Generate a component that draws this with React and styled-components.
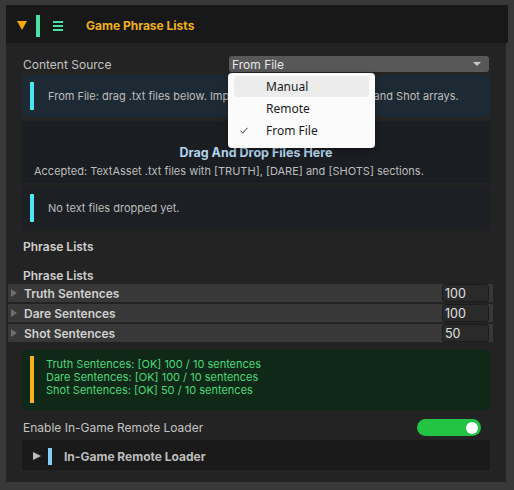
import React from "react"
import styled, { createGlobalStyle } from "styled-components"

const GlobalStyle = createGlobalStyle`
  html, body {
    margin: 0;
    padding: 0;
    background: #383838;
    font-family: Inter, "Noto Sans", sans-serif;
  }
`

const Page = styled.div`
  width: 514px;
  height: 490px;
  padding: 5px 0 0 6px;
  box-sizing: border-box;
  position: relative;
`

const Panel = styled.div`
  width: 500px;
  height: 477px;
  background: #232323;
  display: flex;
  flex-direction: column;
`

const Header = styled.div`
  width: 502px;
  height: 38px;
  flex-shrink: 0;
  background: #181818;
  display: flex;
  align-items: center;
  padding: 3px 0 0 11px;
  box-sizing: border-box;
`

const Caret = styled.div`
  width: 0;
  height: 0;
  border-left: 5px solid transparent;
  border-right: 5px solid transparent;
  border-top: 9px solid #f5a90f;
`

const AccentBar = styled.div`
  width: ${(p) => p.$w || 4}px;
  height: ${(p) => p.$h}px;
  background: ${(p) => p.$color};
  flex-shrink: 0;
`

const Title = styled.div`
  color: #f0b21a;
  font-size: 12px;
  font-weight: 700;
  margin-left: 23px;
`

const Body = styled.div`
  display: flex;
  flex-direction: column;
  padding: 13px 16px 0 16px;
`

const FieldRow = styled.div`
  display: flex;
  align-items: center;
  height: 16px;
  padding-left: 1px;
`

const Label = styled.div`
  width: 206px;
  flex-shrink: 0;
  color: #c4c4c4;
  font-size: 12px;
`

const Dropdown = styled.div`
  flex: 1;
  height: 16px;
  margin-right: 1px;
  background: #585858;
  border-radius: 3px;
  display: flex;
  align-items: center;
  justify-content: space-between;
  padding: 0 8px 0 3px;
  box-sizing: border-box;
  color: #e6e6e6;
  font-size: 12px;
`

const SmallArrow = styled.div`
  width: 0;
  height: 0;
  border-left: 4px solid transparent;
  border-right: 4px solid transparent;
  border-top: 4px solid #c8c8c8;
`

const Note = styled.div`
  margin-top: ${(p) => p.$mt || 4}px;
  width: 468px;
  min-height: ${(p) => p.$h}px;
  background: ${(p) => p.$bg};
  display: flex;
  align-items: ${(p) => (p.$top ? "flex-start" : "center")};
  padding: ${(p) => (p.$top ? "6px 0 0 8px" : "0 0 0 8px")};
  box-sizing: border-box;
`

const NoteText = styled.div`
  margin-left: 14px;
  color: #bdbdbd;
  font-size: 11px;
  line-height: 14px;
  white-space: nowrap;
  overflow: hidden;
`

const DropZone = styled.div`
  margin-top: 4px;
  width: 468px;
  height: 62px;
  background: #1a1d21;
  display: flex;
  flex-direction: column;
  align-items: center;
  padding-top: 24px;
  box-sizing: border-box;
`

const DropTitle = styled.div`
  color: #b4d4ec;
  font-size: 12.5px;
  font-weight: 700;
  line-height: 16px;
`

const DropSub = styled.div`
  align-self: flex-start;
  margin-left: 12px;
  margin-top: 3px;
  color: #bdbdbd;
  font-size: 11px;
  line-height: 14px;
`

const SectionLabel = styled.div`
  margin-top: ${(p) => p.$mt}px;
  padding-left: 1px;
  color: #cfcfcf;
  font-size: 12px;
  font-weight: 600;
  line-height: 14px;
`

const ListRows = styled.div`
  display: flex;
  flex-direction: column;
  gap: 2px;
  margin: 1px 0 0 -14px;
  width: 485px;
`

const ListRow = styled.div`
  height: 18px;
  background: #383838;
  display: flex;
  align-items: center;
  padding-left: 3px;
  box-sizing: border-box;
`

const RowArrow = styled.div`
  width: 0;
  height: 0;
  border-top: 4px solid transparent;
  border-bottom: 4px solid transparent;
  border-left: 6px solid #6e6e6e;
`

const RowLabel = styled.div`
  flex: 1;
  margin-left: 7px;
  color: #d0d0d0;
  font-size: 12px;
  font-weight: 600;
`

const CountField = styled.div`
  width: 47px;
  height: 18px;
  margin-right: 4px;
  background: #2a2a2a;
  border: 1px solid #1c1c1c;
  border-radius: 3px;
  box-sizing: border-box;
  color: #e0e0e0;
  font-size: 12.5px;
  display: flex;
  align-items: center;
  padding-left: 2px;
`

const StatusLines = styled.div`
  margin-left: 12px;
  margin-top: 2px;
  display: flex;
  flex-direction: column;
`

const StatusLine = styled.div`
  color: #4cd97a;
  font-size: 11px;
  line-height: 13px;
`

const ToggleRow = styled.div`
  margin-top: 9px;
  height: 17px;
  display: flex;
  align-items: center;
  justify-content: space-between;
  padding-left: 1px;
  width: 458px;
`

const Toggle = styled.div`
  width: 64px;
  height: 17px;
  border-radius: 9px;
  background: #23c343;
  display: flex;
  align-items: center;
  justify-content: flex-end;
  padding-right: 3px;
  box-sizing: border-box;
`

const Knob = styled.div`
  width: 12px;
  height: 12px;
  border-radius: 50%;
  background: #ffffff;
`

const Foldout = styled.div`
  margin-top: 4px;
  width: 468px;
  height: 30px;
  background: #1a1a1a;
  display: flex;
  align-items: center;
  padding: 2px 0 0 11px;
  box-sizing: border-box;
`

const FoldArrow = styled.div`
  width: 0;
  height: 0;
  border-top: 4.5px solid transparent;
  border-bottom: 4.5px solid transparent;
  border-left: 8px solid #bdbdbd;
  margin-right: 7px;
`

const FoldTitle = styled.div`
  margin-left: 12px;
  color: #bdbdbd;
  font-size: 12px;
  font-weight: 700;
`

const Menu = styled.div`
  position: absolute;
  left: 228px;
  top: 73px;
  width: 147px;
  height: 75px;
  background: #fbfbfb;
  border-radius: 4px;
  box-shadow: 0 2px 6px rgba(0, 0, 0, 0.35);
  padding: 3px 6px;
  box-sizing: border-box;
  display: flex;
  flex-direction: column;
  font-family: "Noto Sans", "Open Sans", sans-serif;
`

const MenuItem = styled.div`
  height: ${(p) => (p.$first ? 21 : 22)}px;
  border-radius: 4px;
  background: ${(p) => (p.$hover ? "#ececec" : "transparent")};
  display: flex;
  align-items: center;
  color: #1b1b1b;
  font-size: 12px;
  position: relative;
  padding-left: 32px;
`

const Check = styled.svg`
  position: absolute;
  left: 6px;
  top: 8px;
`

const hamburger = (
  <svg width="10" height="10" viewBox="0 0 10 10" style={{ marginLeft: 13 }}>
    <rect x="0" y="0" width="10" height="2" fill="#47e2a4" />
    <rect x="0" y="4" width="10" height="2" fill="#47e2a4" />
    <rect x="0" y="8" width="10" height="2" fill="#47e2a4" />
  </svg>
)

const lists = [
  { name: "Truth Sentences", count: 100 },
  { name: "Dare Sentences", count: 100 },
  { name: "Shot Sentences", count: 50 },
]

export default function App() {
  return (
    <Page>
      <GlobalStyle />
      <Panel>
        <Header>
          <Caret />
          <AccentBar $w={4} $h={22} $color="#47e2a4" style={{ marginLeft: 9 }} />
          {hamburger}
          <Title>Game Phrase Lists</Title>
        </Header>

        <Body>
          <FieldRow>
            <Label>Content Source</Label>
            <Dropdown>
              <span>From File</span>
              <SmallArrow />
            </Dropdown>
          </FieldRow>

          <Note $mt={3} $h={42} $bg="#1e2a33">
            <AccentBar $w={4} $h={28} $color="#4ee6f0" />
            <NoteText>
              From File: drag .txt files below. Imported lines refill Truth, Dare and Shot arrays.
            </NoteText>
          </Note>

          <DropZone>
            <DropTitle>Drag And Drop Files Here</DropTitle>
            <DropSub>Accepted: TextAsset .txt files with [TRUTH], [DARE] and [SHOTS] sections.</DropSub>
          </DropZone>

          <Note $h={42} $bg="#1c1f23">
            <AccentBar $w={4} $h={28} $color="#4ee6f0" />
            <NoteText>No text files dropped yet.</NoteText>
          </Note>

          <SectionLabel $mt={11}>Phrase Lists</SectionLabel>
          <SectionLabel $mt={15}>Phrase Lists</SectionLabel>

          <ListRows>
            {lists.map((l) => (
              <ListRow key={l.name}>
                <RowArrow />
                <RowLabel>{l.name}</RowLabel>
                <CountField>{l.count}</CountField>
              </ListRow>
            ))}
          </ListRows>

          <Note $mt={8} $h={60} $bg="#0f2818" $top>
            <AccentBar $w={4} $h={47} $color="#f5b318" />
            <StatusLines>
              {lists.map((l) => (
                <StatusLine key={l.name}>
                  {l.name}: [OK] {l.count} / 10 sentences
                </StatusLine>
              ))}
            </StatusLines>
          </Note>

          <ToggleRow>
            <Label>Enable In-Game Remote Loader</Label>
            <Toggle>
              <Knob />
            </Toggle>
          </ToggleRow>

          <Foldout>
            <FoldArrow />
            <AccentBar $w={4} $h={17} $color="#86cdf7" />
            <FoldTitle>In-Game Remote Loader</FoldTitle>
          </Foldout>
        </Body>
      </Panel>

      <Menu>
        <MenuItem $hover $first>Manual</MenuItem>
        <MenuItem>Remote</MenuItem>
        <MenuItem>
          <Check width="8" height="7" viewBox="0 0 8 7">
            <path d="M0.5 3.8 L2.8 6 L7.5 0.8" fill="none" stroke="#333" strokeWidth="1" />
          </Check>
          From File
        </MenuItem>
      </Menu>
    </Page>
  )
}
